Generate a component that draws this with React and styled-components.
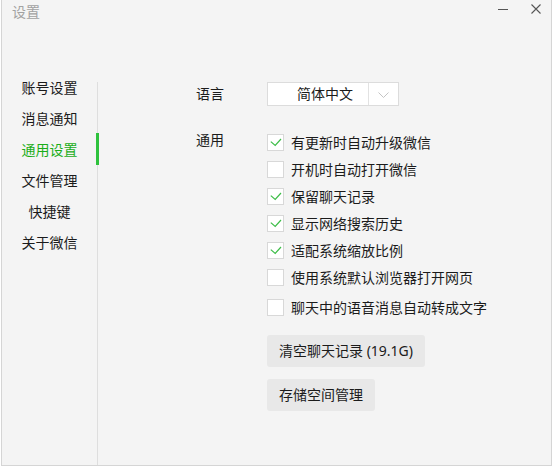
import React, { useState } from "react";
import styled, { createGlobalStyle } from "styled-components";

const GlobalStyle = createGlobalStyle`
  html, body {
    margin: 0;
    padding: 0;
    background: #ffffff;
  }
  body {
    font-family: "Noto Sans", "Noto Sans CJK SC", sans-serif;
    -webkit-font-smoothing: antialiased;
  }
  * { box-sizing: border-box; }
`;

const GREEN = "#1aad19";

const Window = styled.div`
  width: 551px;
  height: 466px;
  margin-left: 1px;
  border: 1px solid #d5d5d5;
  border-top: none;
  background: #f4f4f4;
  display: flex;
  flex-direction: column;
  color: #1b1b1b;
`;

const TitleBar = styled.div`
  height: 82px;
  flex-shrink: 0;
  display: flex;
  justify-content: space-between;
  align-items: flex-start;
  padding: 4px 10px 0 10px;
`;

const Title = styled.div`
  font-size: 14px;
  line-height: 16px;
  margin-top: 0px;
  color: #a2a2a2;
`;

const Controls = styled.div`
  display: flex;
  gap: 23px;
`;

const CtrlButton = styled.button`
  width: 10px;
  height: 10px;
  padding: 0;
  border: none;
  background: transparent;
  display: block;
  cursor: pointer;
  svg { display: block; }
`;

const Body = styled.div`
  flex: 1;
  min-height: 0;
  display: flex;
`;

const Sidebar = styled.nav`
  width: 96px;
  flex-shrink: 0;
  border-right: 1px solid #dedede;
`;

const NavList = styled.ul`
  list-style: none;
  margin: -10px 0 0 0;
  padding: 0;
`;

const NavItem = styled.li`
  position: relative;
  height: 31px;
  line-height: 31px;
  text-align: center;
  font-size: 14px;
  color: ${(p) => (p.$active ? GREEN : "#1b1b1b")};
  cursor: pointer;

  &::after {
    content: "";
    display: ${(p) => (p.$active ? "block" : "none")};
    position: absolute;
    top: -1px;
    bottom: 0;
    right: -2px;
    width: 3px;
    background: #2ec23d;
  }
`;

const Main = styled.section`
  flex: 1;
  padding-left: 98px;
  display: grid;
  grid-template-columns: 71px auto;
  grid-auto-rows: min-content;
  align-content: start;
  row-gap: 28px;
`;

const Label = styled.div`
  font-size: 14px;
  line-height: ${(p) => (p.$tall ? "24px" : "17px")};
  margin-top: ${(p) => p.$shift || 0}px;
  color: #1b1b1b;
`;

const Select = styled.div`
  justify-self: start;
  width: 132px;
  height: 24px;
  display: flex;
  border: 1px solid #dcdcdc;
  background: #ffffff;
`;

const SelectValue = styled.div`
  width: 100px;
  padding-left: 29px;
  font-size: 14px;
  line-height: 22px;
  color: #1b1b1b;
`;

const SelectArrow = styled.div`
  width: 30px;
  border-left: 1px solid #e2e2e2;
  display: flex;
  align-items: center;
  justify-content: center;
  padding-top: 1px;
`;

const Options = styled.div`
  display: flex;
  flex-direction: column;
  align-items: flex-start;
`;

const CheckRow = styled.label`
  display: flex;
  align-items: center;
  gap: 7px;
  height: 17px;
  margin-top: ${(p) => p.$gap}px;
  font-size: 14px;
  line-height: 17px;
  color: #1b1b1b;
  cursor: pointer;
`;

const Box = styled.span`
  width: 17px;
  height: 17px;
  flex-shrink: 0;
  border: 1px solid #d8d8d8;
  background: #ffffff;
  position: relative;
  svg {
    position: absolute;
    left: -1px;
    top: -1px;
  }
`;

const Actions = styled.div`
  margin-top: 19px;
  display: flex;
  flex-direction: column;
  align-items: flex-start;
  gap: 12px;
`;

const ActionButton = styled.button`
  height: 32px;
  padding: 0 12px;
  border: none;
  border-radius: 3px;
  background: #e8e8e8;
  font-family: inherit;
  font-size: 14px;
  line-height: 32px;
  color: #1b1b1b;
  cursor: pointer;
`;

const navItems = ["账号设置", "消息通知", "通用设置", "文件管理", "快捷键", "关于微信"];

const optionList = [
  { text: "有更新时自动升级微信", on: true, gap: 0 },
  { text: "开机时自动打开微信", on: false, gap: 10 },
  { text: "保留聊天记录", on: true, gap: 10 },
  { text: "显示网络搜索历史", on: true, gap: 10 },
  { text: "适配系统缩放比例", on: true, gap: 10 },
  { text: "使用系统默认浏览器打开网页", on: false, gap: 10 },
  { text: "聊天中的语音消息自动转成文字", on: false, gap: 13 },
];

function Check({ on }) {
  return (
    <Box>
      {on && (
        <svg width="17" height="17" viewBox="0 0 17 17">
          <polyline
            points="3.8,7.6 8.2,11.4 14,5"
            fill="none"
            stroke="#3cbd47"
            strokeWidth="1.2"
          />
        </svg>
      )}
    </Box>
  );
}

export default function App() {
  const [active, setActive] = useState(2);
  const [opts, setOpts] = useState(optionList.map((o) => o.on));

  return (
    <>
      <GlobalStyle />
      <Window>
        <TitleBar>
          <Title>设置</Title>
          <Controls>
            <CtrlButton aria-label="最小化">
              <svg width="10" height="10" viewBox="0 0 10 10">
                <line x1="0" y1="5.5" x2="10" y2="5.5" stroke="#555" strokeWidth="1" />
              </svg>
            </CtrlButton>
            <CtrlButton aria-label="关闭">
              <svg width="10" height="10" viewBox="0 0 10 10">
                <path d="M0.5 0.5 L9.5 9.5 M9.5 0.5 L0.5 9.5" stroke="#555" strokeWidth="1.1" />
              </svg>
            </CtrlButton>
          </Controls>
        </TitleBar>
        <Body>
          <Sidebar>
            <NavList>
              {navItems.map((n, i) => (
                <NavItem key={n} $active={i === active} onClick={() => setActive(i)}>
                  {n}
                </NavItem>
              ))}
            </NavList>
          </Sidebar>
          <Main>
            <Label $tall>语言</Label>
            <Select>
              <SelectValue>简体中文</SelectValue>
              <SelectArrow>
                <svg width="11" height="6" viewBox="0 0 11 6">
                  <polyline points="0.5,0.5 5.5,5.5 10.5,0.5" fill="none" stroke="#c4c4c4" strokeWidth="1" />
                </svg>
              </SelectArrow>
            </Select>
            <Label $shift={-3}>通用</Label>
            <Options>
              {optionList.map((o, i) => (
                <CheckRow
                  key={o.text}
                  $gap={o.gap}
                  onClick={() => setOpts((s) => s.map((v, j) => (j === i ? !v : v)))}
                >
                  <Check on={opts[i]} />
                  {o.text}
                </CheckRow>
              ))}
              <Actions>
                <ActionButton>清空聊天记录 (19.1G)</ActionButton>
                <ActionButton>存储空间管理</ActionButton>
              </Actions>
            </Options>
          </Main>
        </Body>
      </Window>
    </>
  );
}
